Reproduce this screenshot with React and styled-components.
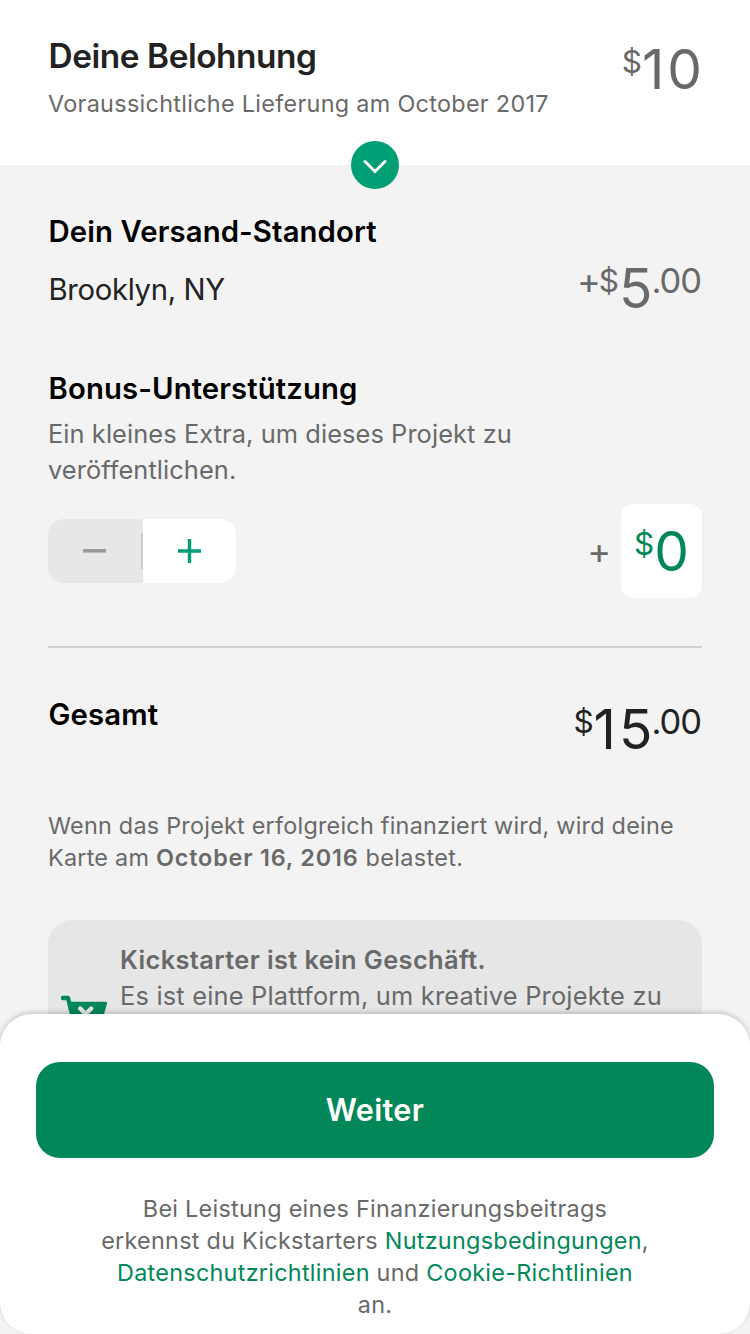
import React from "react";
import styled, { createGlobalStyle } from "styled-components";

const GlobalStyle = createGlobalStyle`
  * { box-sizing: border-box; }
  body { margin: 0; background: #f3f3f3; }
  h1, h2, p { margin: 0; }
`;

const Screen = styled.div`
  position: relative;
  width: 750px;
  height: 1334px;
  overflow: hidden;
  background: #f3f3f3;
  color: #222;
  font-family: Inter, "Liberation Sans", sans-serif;
`;

const Header = styled.header`
  position: relative;
  display: flex;
  justify-content: space-between;
  height: 165px;
  padding: 36px 48px 0;
  background: #fff;
`;

const Title = styled.h1`
  font-size: 33.4px;
  line-height: 40px;
  font-weight: 600;
  letter-spacing: -0.45px;
  text-indent: 0.6px;
`;

const Subtitle = styled.p`
  margin-top: 12px;
  font-size: 23.4px;
  line-height: 32px;
  letter-spacing: 0.3px;
  color: #696969;
`;

const Toggle = styled.button`
  position: absolute;
  left: 351px;
  bottom: -24px;
  display: grid;
  place-items: center;
  width: 48px;
  height: 48px;
  padding: 0;
  border: 0;
  border-radius: 50%;
  background: #009e74;
`;

const Body = styled.main`
  padding: 50px 48px 0;
`;

const Row = styled.div`
  display: flex;
  justify-content: space-between;
  align-items: ${(p) => p.$align || "flex-start"};
  height: ${(p) => p.$height}px;
  margin-top: ${(p) => p.$top || 0}px;
`;

const Heading = styled.h2`
  font-size: 29.3px;
  line-height: 34px;
  font-weight: 600;
  letter-spacing: 0.12px;
  text-indent: 0.5px;
  color: #000;
`;

const Location = styled.p`
  margin-top: 24px;
  font-size: 29.3px;
  line-height: 34px;
  letter-spacing: -0.35px;
  text-indent: 0.5px;
`;

const Hint = styled.p`
  margin-top: 10px;
  font-size: 25.4px;
  line-height: 36px;
  letter-spacing: 0.08px;
  color: #696969;
`;

const Price = styled.div`
  display: flex;
  align-items: flex-start;
  color: ${(p) => p.$color || "#696969"};
  margin-top: ${(p) => p.$top || 0}px;
`;

const Whole = styled.span`
  margin-right: -3px;
  font-size: 55px;
  line-height: 56px;
  letter-spacing: 3px;
`;

const Small = styled.span`
  font-size: 34.5px;
  line-height: 42px;
`;

const Cents = styled(Small)`
  margin: 0 1px 0 -1px;
  letter-spacing: -1px;
`;

const Plus = styled(Small)`
  margin-right: ${(p) => (p.$alone ? -3 : -2)}px;
  font-size: 36px;
`;

const Currency = styled.span`
  font-size: 31.5px;
  line-height: 42px;
`;

const Stepper = styled.div`
  display: flex;
  width: 188px;
  height: 64px;
  border-radius: 16px;
  overflow: hidden;
`;

const StepButton = styled.button`
  display: grid;
  place-items: center;
  flex: ${(p) => (p.$muted ? "0 0 93px" : "1")};
  padding: 0;
  border: 0;
  background: ${(p) => (p.$muted ? "#e7e7e7" : "#fff")};
`;

const StepDivider = styled.div`
  display: flex;
  align-items: center;
  width: 2px;
  background: #e7e7e7;
  &::after {
    content: "";
    width: 2px;
    height: 36px;
    background: #cbcbcb;
  }
`;

const Bonus = styled.div`
  display: flex;
  align-items: center;
  gap: 13px;
`;

const AmountBox = styled.div`
  display: flex;
  justify-content: center;
  width: 81px;
  height: 94px;
  border-radius: 12px;
  background: #fff;
`;

const Rule = styled.hr`
  height: 2px;
  margin: 48px 0 50px;
  border: 0;
  background: #cfcfcf;
`;

const Note = styled.p`
  font-size: 23.4px;
  line-height: 32px;
  letter-spacing: 0.23px;
  color: #696969;
  b {
    font-weight: 600;
    letter-spacing: 0.83px;
  }
`;

const Tail = styled.span`
  letter-spacing: 0.36px;
`;

const Notice = styled.section`
  display: flex;
  margin-top: 46px;
  height: 180px;
  padding: 22px 12px 0;
  border-radius: 24px;
  background: #e6e6e6;
`;

const NoticeText = styled.p`
  margin-left: 12px;
  font-size: 25.4px;
  line-height: 36px;
  letter-spacing: 0.2px;
  color: #696969;
  white-space: nowrap;
  b {
    font-weight: 600;
    letter-spacing: 0.38px;
  }
`;

const CartIcon = styled.svg`
  margin-top: 53px;
  flex: 0 0 48px;
`;

const Sheet = styled.footer`
  position: absolute;
  left: 0;
  right: 0;
  bottom: 0;
  height: 320px;
  padding: 48px 36px 0;
  border-radius: 32px;
  background: #fff;
  box-shadow: 0 -2px 5px rgba(0, 0, 0, 0.18);
`;

const Continue = styled.button`
  display: block;
  width: 100%;
  height: 96px;
  padding: 0 0 2px;
  border: 0;
  border-radius: 24px;
  background: #028858;
  color: #fff;
  font: 600 30.6px Inter, sans-serif;
  letter-spacing: 0.3px;
`;

const Legal = styled.p`
  margin-top: 35px;
  text-align: center;
  font-size: 23.4px;
  line-height: 32px;
  letter-spacing: 0.27px;
  color: #696969;
  white-space: nowrap;
`;

const Link = styled.a`
  color: #028858;
`;

export default function App() {
  return (
    <Screen>
      <GlobalStyle />
      <Header>
        <div>
          <Title>Deine Belohnung</Title>
          <Subtitle>Voraussichtliche Lieferung am October 2017</Subtitle>
        </div>
        <Price $top={5}>
          <Currency>$</Currency>
          <Whole>10</Whole>
        </Price>
        <Toggle aria-label="Details">
          <svg width="24" height="20" viewBox="0 0 24 20" fill="none">
            <path d="M2 6.500 12 16.500 22 6.500" stroke="#fff" strokeWidth="3" strokeLinecap="round" />
          </svg>
        </Toggle>
      </Header>
      <Body>
        <Row $height={157}>
          <div>
            <Heading>Dein Versand-Standort</Heading>
            <Location>Brooklyn, NY</Location>
          </div>
          <Price $top={45}>
            <Plus>+</Plus>
            <Currency>$</Currency>
            <Whole>5</Whole>
            <Cents>.00</Cents>
          </Price>
        </Row>
        <Heading>Bonus-Unterstützung</Heading>
        <Hint>
          Ein kleines Extra, um dieses Projekt zu
          <br />
          veröffentlichen.
        </Hint>
        <Row $height={94} $top={16} $align="center">
          <Stepper>
            <StepButton $muted aria-label="Weniger">
              <svg width="23" height="4"><rect width="23" height="3.6" fill="#9b9b9b" /></svg>
            </StepButton>
            <StepDivider />
            <StepButton aria-label="Mehr">
              <svg width="23" height="24"><path d="M11.500 0v24M0 12h23" stroke="#009e74" strokeWidth="3.400" /></svg>
            </StepButton>
          </Stepper>
          <Bonus>
            <Price><Plus $alone>+</Plus></Price>
            <AmountBox>
              <Price $color="#028858" $top={19}>
                <Currency>$</Currency>
                <Whole>0</Whole>
              </Price>
            </AmountBox>
          </Bonus>
        </Row>
        <Rule />
        <Row $height={112}>
          <Heading>Gesamt</Heading>
          <Price $color="#222" $top={3}>
            <Currency>$</Currency>
            <Whole>15</Whole>
            <Cents>.00</Cents>
          </Price>
        </Row>
        <Note>
          Wenn das Projekt erfolgreich finanziert wird, wird deine
          <br />
          Karte am <b>October 16, 2016</b>
          <Tail> belastet.</Tail>
        </Note>
        <Notice>
          <CartIcon width="48" height="44" viewBox="0 0 48 44">
            <path d="M3 3h5l6 24h26" fill="none" stroke="#028858" strokeWidth="4.400" strokeLinecap="round" strokeLinejoin="round" />
            <path d="M8 6.700h37.500q2 0 1.500 2l-5 17H12z" fill="#028858" />
            <path d="m20.200 13.500 11 11m0-11-11 11" stroke="#e6e6e6" strokeWidth="4.400" strokeLinecap="round" />
          </CartIcon>
          <NoticeText>
            <b>Kickstarter ist kein Geschäft.</b>
            <br />
            Es ist eine Plattform, um kreative Projekte zu
          </NoticeText>
        </Notice>
      </Body>
      <Sheet>
        <Continue>Weiter</Continue>
        <Legal>
          Bei Leistung eines Finanzierungsbeitrags
          <br />
          erkennst du Kickstarters <Link>Nutzungsbedingungen</Link>,
          <br />
          <Link>Datenschutzrichtlinien</Link> und <Link>Cookie-Richtlinien</Link>
          <br />
          an.
        </Legal>
      </Sheet>
    </Screen>
  );
}
